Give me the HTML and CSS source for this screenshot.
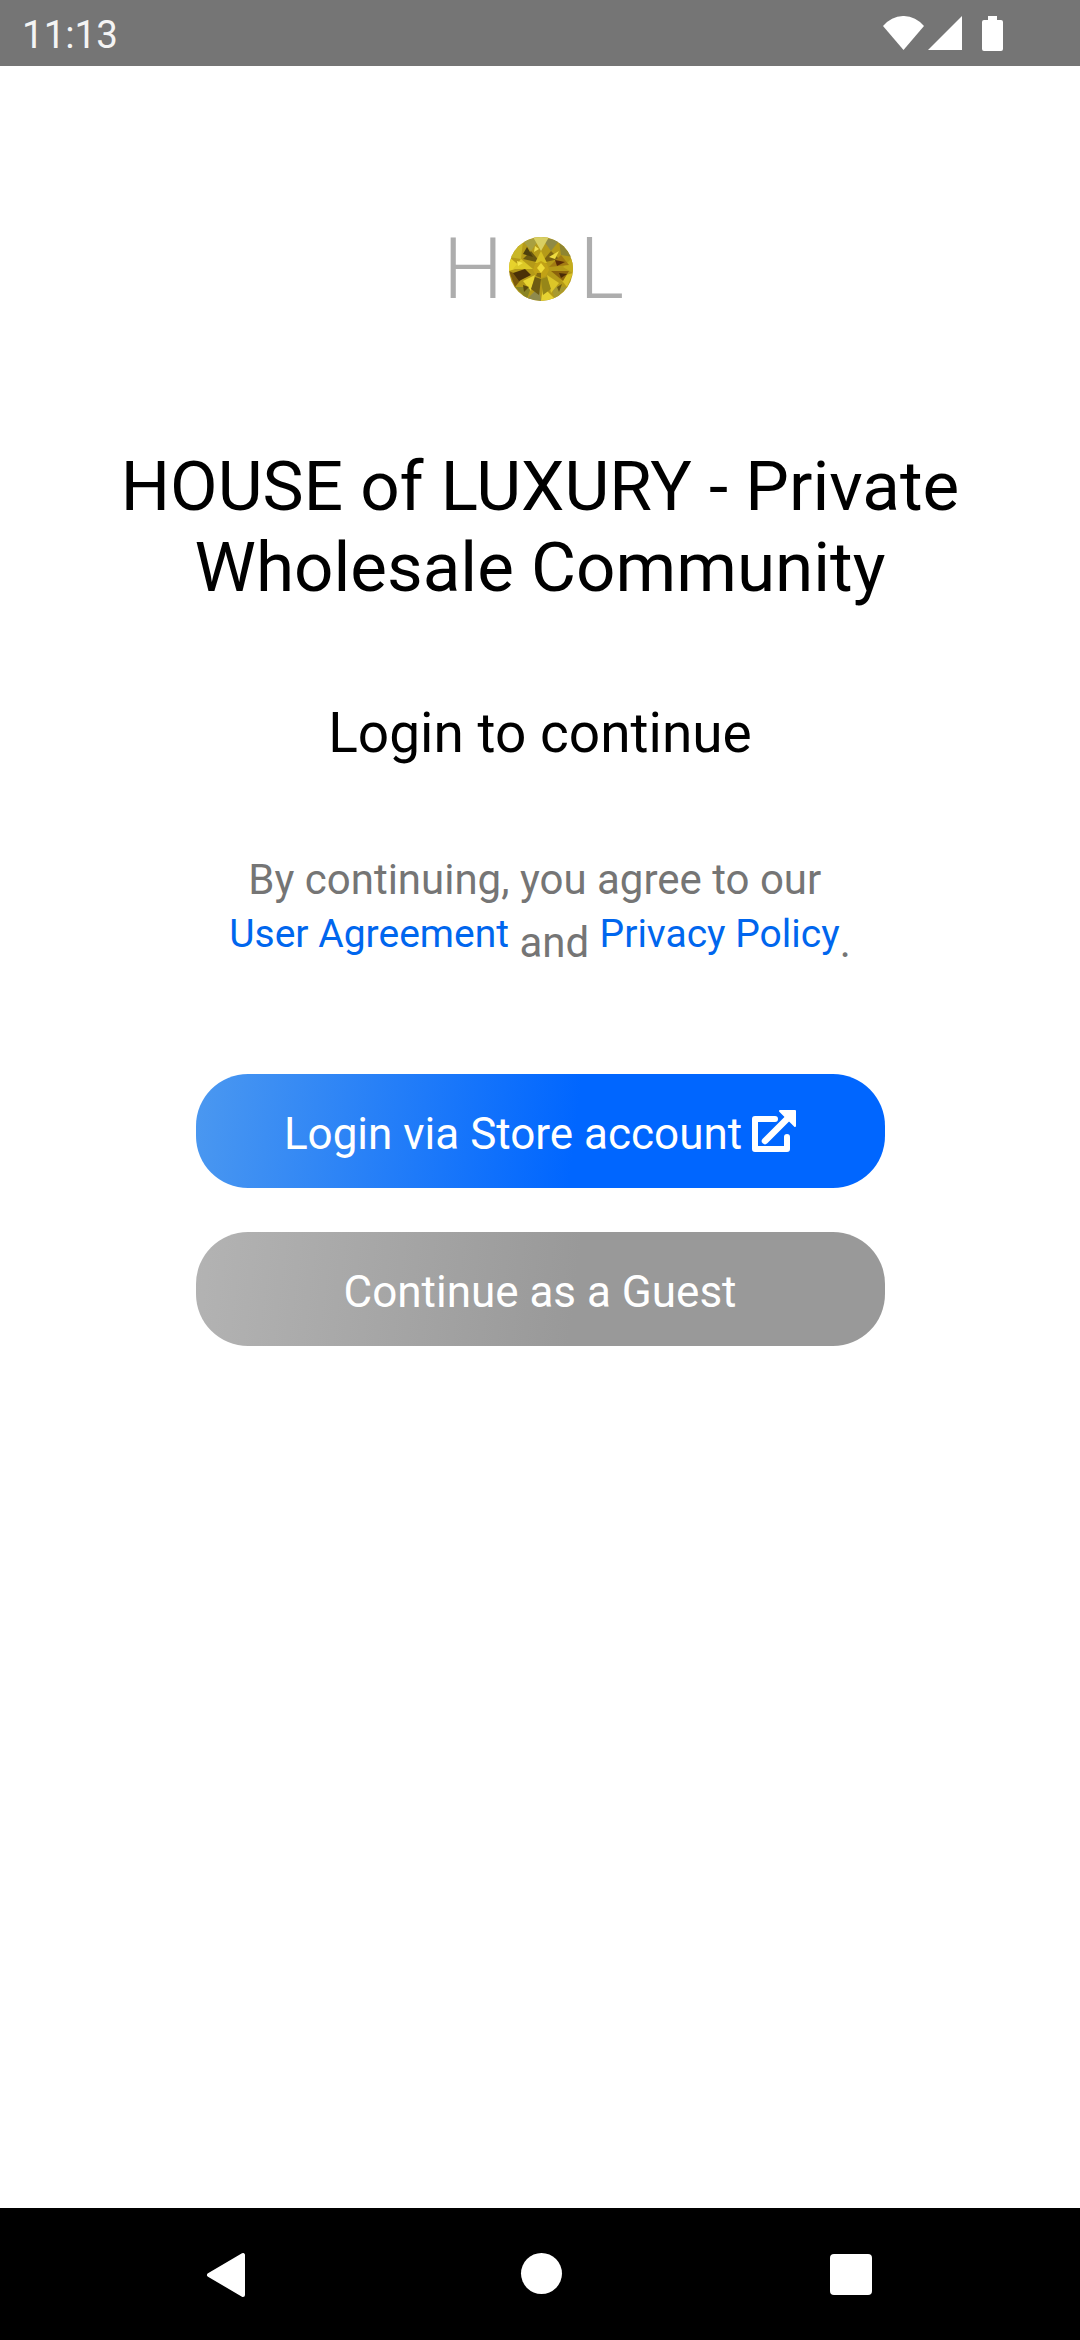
FILE: index.html
```html
<!DOCTYPE html>
<html lang="en">
<head>
    <meta charset="UTF-8">
    <meta name="viewport" content="width=device-width, initial-scale=1.0">
    <title>House of Luxury</title>
    <link rel="stylesheet" href="styles.css">
</head>
<body>
    <div class="status-bar">
        <span class="clock">11:13</span>
        <div class="status-icons">
            <svg class="icon-wifi" viewBox="0 0 41 34"><path d="M0 10 A26 26 0 0 1 41 10 L20.5 34 Z" fill="#fff"/></svg>
            <svg class="icon-signal" viewBox="0 0 34 34"><path d="M0 34 L34 0 V34 Z" fill="#fff"/></svg>
            <svg class="icon-battery" viewBox="0 0 21 35"><path d="M6 0 H15 V4 H19 Q21 4 21 6 V33 Q21 35 19 35 H2 Q0 35 0 33 V6 Q0 4 2 4 H6 Z" fill="#fff"/></svg>
        </div>
    </div>

    <main class="content">
        <div class="logo">
            <span class="logo-letter">H</span>
            <svg class="diamond" viewBox="0 0 64 64">
                <defs><clipPath id="stone"><circle cx="32" cy="32" r="32"/></clipPath></defs>
                <g clip-path="url(#stone)">
                    <rect width="64" height="64" fill="#b59a18"/>
                    <!-- outer ring -->
                    <path d="M32 0 L14 4 L22 14 Z" fill="#a8a040"/>
                    <path d="M32 0 L50 4 L42 14 Z" fill="#8f8a45"/>
                    <path d="M24 0 L32 14 L40 0 Z" fill="#d8cf62"/>
                    <path d="M14 4 L0 20 L12 22 Z" fill="#c9b728"/>
                    <path d="M50 4 L64 20 L52 18 Z" fill="#8f8530"/>
                    <path d="M0 20 L0 34 L12 30 Z" fill="#e6d22c"/>
                    <path d="M64 20 L64 36 L54 30 Z" fill="#c4ac1c"/>
                    <path d="M0 34 L6 50 L14 40 Z" fill="#7c5a0c"/>
                    <path d="M64 36 L58 50 L50 40 Z" fill="#d8c026"/>
                    <path d="M6 50 L18 62 L22 50 Z" fill="#8a8424"/>
                    <path d="M58 50 L46 62 L42 50 Z" fill="#a89a30"/>
                    <path d="M18 62 L32 64 L30 50 Z" fill="#8f8a4c"/>
                    <path d="M46 62 L32 64 L34 50 Z" fill="#e6d232"/>
                    <!-- crown -->
                    <path d="M22 14 L32 26 L14 22 Z" fill="#6a5810"/>
                    <path d="M42 14 L32 26 L50 22 Z" fill="#7d6410"/>
                    <path d="M32 14 L26 26 L38 26 Z" fill="#d6c022"/>
                    <path d="M12 22 L24 32 L4 32 Z" fill="#dcc826"/>
                    <path d="M52 18 L40 30 L60 28 Z" fill="#a27a12"/>
                    <path d="M46 23 L56 25 L48 29 Z" fill="#5a2c06"/>
                    <path d="M4 36 L16 32 L22 38 L10 44 Z" fill="#4a3006"/>
                    <path d="M60 34 L42 34 L54 44 Z" fill="#8c640c"/>
                    <path d="M50 36 L58 37 L52 41 Z" fill="#4a2a06"/>
                    <path d="M14 44 L26 38 L22 54 Z" fill="#e8d430"/>
                    <path d="M50 46 L38 38 L42 56 Z" fill="#dcc628"/>
                    <path d="M26 40 L22 52 L30 58 L32 42 Z" fill="#6e5c12"/>
                    <path d="M38 40 L42 52 L34 58 L32 42 Z" fill="#968618"/>
                    <path d="M18 10 L24 20 L14 17 Z" fill="#4e400c"/>
                    <path d="M40 20 L50 14 L46 22 Z" fill="#eedc40"/>
                    <path d="M8 24 L14 26 L9 29 Z" fill="#f4e54a"/>
                    <path d="M14 48 L20 50 L15 55 Z" fill="#5c4a0c"/>
                    <path d="M48 50 L53 47 L50 55 Z" fill="#6a5a14"/>
                    <path d="M26 9 L30 12 L25 15 Z" fill="#f0e050"/>
                    <!-- table -->
                    <path d="M32 24 L38 27 L40 33 L37 39 L32 41 L27 39 L24 33 L26 27 Z" fill="#c2a216"/>
                    <path d="M32 26 L36 31 L32 36 L28 31 Z" fill="#eeda36"/>
                    <path d="M28 36 L32 36 L32 41 L27 39 Z" fill="#846a10"/>
                </g>
            </svg>
            <span class="logo-letter">L</span>
        </div>

        <h1 class="title">HOUSE of LUXURY - Private Wholesale Community</h1>
        <h2 class="subtitle">Login to continue</h2>

        <div class="terms">
            <div class="terms-line first-line">By continuing, you agree to our&nbsp;</div>
            <div class="terms-line">
                <a class="terms-link" href="#">User Agreement</a> and <a class="terms-link" href="#">Privacy Policy</a><span class="terms-dot">.</span>
            </div>
        </div>

        <div class="actions">
            <a class="btn btn-primary" href="#">
                <span>Login via Store account</span>
                <svg class="icon-external" viewBox="0 0 44 44">
                    <path d="M23 10 H3 V40 H35 V28" fill="none" stroke="#fff" stroke-width="6" stroke-linecap="round" stroke-linejoin="round"/>
                    <path d="M13 32 L36 9" fill="none" stroke="#fff" stroke-width="6.5" stroke-linecap="round"/>
                    <path d="M28 2 H43 V17 Z" fill="#fff" stroke="#fff" stroke-width="2" stroke-linejoin="round"/>
                </svg>
            </a>
            <a class="btn btn-guest" href="#">Continue as a Guest</a>
        </div>
    </main>

    <div class="nav-bar">
        <svg class="icon-back" viewBox="0 0 40 46"><path d="M3 23 L37 3 V43 Z" fill="#fff" stroke="#fff" stroke-width="4" stroke-linejoin="round"/></svg>
        <div class="icon-home"></div>
        <div class="icon-recent"></div>
    </div>
</body>
</html>
```

FILE: styles.css
```css
* {
    box-sizing: border-box;
}

body {
    font-family: 'Roboto', Arial, sans-serif;
    margin: 0;
    width: 1080px;
    height: 2340px;
    display: flex;
    flex-direction: column;
    background-color: #fff;
    color: #000;
}

.status-bar {
    height: 66px;
    flex-shrink: 0;
    display: flex;
    justify-content: space-between;
    align-items: center;
    padding: 0 77px 0 22px;
    background-color: #757575;
}

.clock {
    color: #f4f4f4;
    font-size: 38.5px;
    padding-top: 2px;
}

.status-icons {
    display: flex;
    align-items: flex-start;
}

.icon-wifi {
    width: 41px;
    height: 34px;
    margin-right: 4px;
}

.icon-signal {
    width: 34px;
    height: 34px;
    margin-right: 20px;
}

.icon-battery {
    width: 21px;
    height: 35px;
}

.content {
    flex: 1;
    display: flex;
    flex-direction: column;
    align-items: center;
    padding-top: 171px;
}

.logo {
    display: flex;
    align-items: center;
    height: 64px;
    gap: 6px;
    margin-right: 13px;
}

.logo-letter {
    font-size: 85px;
    font-weight: 300;
    line-height: 64px;
    color: #adadad;
}

.diamond {
    width: 64px;
    height: 64px;
}

.title {
    width: 900px;
    margin: 145px 0 0;
    font-size: 69.2px;
    font-weight: 400;
    line-height: 81px;
    text-align: center;
}

.subtitle {
    margin: 95px 0 0;
    font-size: 55px;
    font-weight: 400;
    line-height: 60px;
}

.terms {
    margin-top: 90px;
    font-size: 42px;
    color: #757575;
    text-align: center;
}

.terms-line {
    line-height: 54px;
}

.terms-link {
    color: #0066ee;
    font-size: 39px;
    text-decoration: none;
    vertical-align: 10px;
}

.actions {
    margin-top: 104px;
    display: flex;
    flex-direction: column;
    gap: 44px;
}

.btn {
    width: 689px;
    height: 114px;
    display: flex;
    justify-content: center;
    align-items: center;
    gap: 10px;
    padding-top: 6px;
    border-radius: 52px;
    font-size: 44px;
    color: #fff;
    text-decoration: none;
}

.btn-primary {
    background: linear-gradient(97deg, #4b98f0 0%, #0066ff 55%);
}

.btn-guest {
    background: linear-gradient(97deg, #b3b3b3 0%, #999 55%);
}

.icon-external {
    width: 44px;
    height: 44px;
    margin-top: -6px;
}

.nav-bar {
    height: 132px;
    flex-shrink: 0;
    display: grid;
    grid-template-columns: 40px 41px 42px;
    justify-content: space-between;
    align-items: start;
    padding: 44px 208px 0 206px;
    background-color: #000;
}

.icon-back {
    width: 40px;
    height: 46px;
}

.icon-home {
    width: 41px;
    height: 41px;
    margin: 1px 0 0 3px;
    border-radius: 50%;
    background-color: #fff;
}

.icon-recent {
    width: 42px;
    height: 41px;
    margin-top: 2px;
    border-radius: 4px;
    background-color: #fff;
}
```
